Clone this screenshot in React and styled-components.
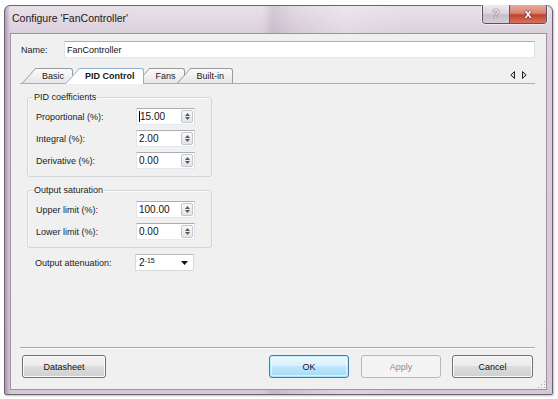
import React from 'react';
import styled, { createGlobalStyle } from 'styled-components';

const Global = createGlobalStyle`
  html, body { margin: 0; padding: 0; background: #ffffff; }
  body {
    font-family: "Liberation Sans", Arial, sans-serif;
    font-size: 9px;
    color: #111;
  }
`;

const Page = styled.div`
  width: 558px;
  height: 399px;
  box-sizing: border-box;
  padding: 5px 5px 4px 4px;
  display: flex;
`;

const Window = styled.div`
  flex: 1;
  display: flex;
  flex-direction: column;
  border: 1px solid #6d6470;
  border-radius: 6px 6px 2px 2px;
  padding: 0 5px 4px 5px;
  box-shadow: 1px 1px 2px rgba(0, 0, 0, 0.25);
  background:
    linear-gradient(to right, rgba(140, 105, 145, 0.55) 0px, rgba(150, 120, 155, 0.15) 4px, rgba(150, 120, 155, 0) 5px),
    linear-gradient(to right, rgba(255,255,255,0) 0%, rgba(255,255,255,0) 47%, rgba(120,100,125,0.18) 49%, rgba(120,100,125,0.05) 53%, rgba(255,255,255,0.18) 62%, rgba(255,255,255,0) 75%),
    linear-gradient(to bottom, #e9e1ea 0px, #dbd0dc 26px, #d6c9d7 100%);
`;

const TitleBar = styled.div`
  height: 27px;
  display: flex;
  align-items: flex-start;
  padding-left: 2px;
`;

const TitleText = styled.div`
  font-family: "Liberation Sans", Arial, sans-serif;
  font-size: 10.5px;
  line-height: 13px;
  padding-top: 6px;
  color: #1a1a1a;
  flex: 1;
`;

const CaptionGroup = styled.div`
  display: flex;
  margin-top: -1px;
  border: 1px solid #5c5462;
  border-top: none;
  border-radius: 0 0 4px 4px;
  overflow: hidden;
  height: 18px;
  box-shadow: 0 0 0 1px rgba(255,255,255,0.5);
`;

const CaptionButton = styled.div`
  width: ${p => p.$w}px;
  display: flex;
  align-items: center;
  justify-content: center;
  font-weight: 700;
  font-size: ${p => p.$fs}px;
  line-height: 1;
  padding-bottom: 1px;
  box-sizing: border-box;
  color: ${p => (p.$close ? '#ffffff' : '#e9e6ec')};
  text-shadow: ${p =>
    p.$close
      ? '0 0 1px #4a2020, 0 0 1px #4a2020, 0 0 1px #4a2020'
      : '0 0 1px #5a5560, 0 0 1px #5a5560'};
  border-left: ${p => (p.$close ? '1px solid #5c5462' : 'none')};
  background: ${p =>
    p.$close
      ? 'linear-gradient(to bottom, #e7aa9c 0%, #d98573 45%, #c4432d 55%, #d2745f 100%)'
      : 'linear-gradient(to bottom, #eeebf0 0%, #dcd6df 45%, #c6bfca 55%, #d3cdd6 100%)'};
`;

const Client = styled.div`
  flex: 1;
  position: relative;
  display: flex;
  flex-direction: column;
  background: #f0f0f0;
  border: 1px solid #9d93a0;
  padding: 7px 11px 11px 10px;
`;

const NameRow = styled.div`
  display: flex;
  align-items: center;
  height: 17px;
`;

const Label = styled.div`
  width: ${p => p.$w || 0}px;
  flex: none;
  color: #1a1a1a;
  white-space: nowrap;
`;

const TextInput = styled.div`
  flex: 1;
  height: 17px;
  box-sizing: border-box;
  background: #fff;
  border: 1px solid;
  border-color: #abadb3 #dbdfe6 #e3e9ef #e2e3ea;
  padding-left: 2px;
  display: flex;
  align-items: center;
`;

const TabStrip = styled.div`
  margin-top: 10px;
  margin-left: -1px;
  height: 15px;
  display: flex;
  align-items: flex-end;
  border-bottom: 1px solid #8db2e3;
  padding-left: 2px;
`;

const Tab = styled.div`
  position: relative;
  z-index: ${p => (p.$active ? 10 : p.$z)};
  box-sizing: border-box;
  height: ${p => (p.$active ? 16 : 15)}px;
  margin-bottom: ${p => (p.$active ? -1 : 0)}px;
  margin-left: ${p => (p.$first ? 0 : -8)}px;
  padding: ${p => (p.$active ? '0 9px 1px 20px' : '0 9px 0 20px')};
  display: flex;
  align-items: center;
  font-weight: ${p => (p.$active ? 700 : 400)};
  color: #1a1a1a;
  white-space: nowrap;

  &::before {
    content: '';
    position: absolute;
    z-index: -1;
    left: 14px;
    right: 0;
    top: 0;
    bottom: 0;
    background: ${p => (p.$active ? '#ffffff' : 'linear-gradient(to bottom, #fbfbfb, #e6e6e6)')};
    border: 1px solid ${p => (p.$active ? '#8fb0d4' : '#9a9a9a')};
    border-left: none;
    border-bottom: none;
    border-radius: 0 3px 0 0;
  }

  &::after {
    content: '';
    position: absolute;
    z-index: -1;
    left: 0;
    top: 0;
    bottom: 0;
    width: 16px;
    background: ${p => (p.$active ? '#ffffff' : 'linear-gradient(to bottom, #fbfbfb, #e6e6e6)')};
    border-left: 1px solid ${p => (p.$active ? '#8fb0d4' : '#9a9a9a')};
    border-top: 1px solid ${p => (p.$active ? '#8fb0d4' : '#9a9a9a')};
    transform-origin: bottom left;
    transform: skewX(-42deg);
  }
`;

const ScrollArrows = styled.div`
  margin-left: auto;
  align-self: center;
  display: flex;
  gap: 7px;
  padding-right: 8px;
  margin-bottom: 1px;
`;

const TabBody = styled.div`
  flex: 1;
  padding: 8px 0 0 6px;
  display: flex;
  flex-direction: column;
  align-items: flex-start;
`;

const GroupBox = styled.fieldset`
  margin: ${p => p.$mt || 0}px 0 0 0;
  width: 185px;
  box-sizing: border-box;
  border: 1px solid #d2d6db;
  border-radius: 3px;
  padding: 5px 8px 7px 8px;
  box-shadow: inset 1px 1px 0 #fbfbfb;
`;

const Legend = styled.legend`
  padding: 0 1px;
  margin-left: -3px;
  line-height: 11px;
  color: #1a1a1a;
`;

const FormGrid = styled.div`
  display: grid;
  grid-template-columns: 100px 59px;
  row-gap: 5px;
  align-items: center;
  padding-left: ${p => p.$pl || 0}px;
  margin-top: ${p => p.$mt || 0}px;
`;

const SpinBox = styled.div`
  height: 17px;
  box-sizing: border-box;
  background: #fff;
  border: 1px solid;
  border-color: #abadb3 #dbdfe6 #e3e9ef #e2e3ea;
  display: flex;
  align-items: stretch;
`;

const SpinValue = styled.div`
  flex: 1;
  display: flex;
  align-items: center;
  padding-left: 2px;
  color: #111;
  font-size: 10px;
`;

const Caret = styled.span`
  display: inline-block;
  width: 1px;
  height: 11px;
  background: #000;
`;

const Spinner = styled.div`
  width: 12px;
  margin: 1px 1px 1px 0;
  box-sizing: border-box;
  border: 1px solid #c3c7cc;
  border-radius: 2px;
  background: linear-gradient(to bottom, #f8f8f8, #e4e4e4);
  display: flex;
  flex-direction: column;
  align-items: center;
  justify-content: center;
  gap: 1px;
`;

const Combo = styled(SpinBox)`
  border-color: #b7bcc3 #d5d9de #d5d9de #d5d9de;
  align-items: center;
  padding-right: 5px;
  justify-content: space-between;
`;

const ComboValue = styled.div`
  padding-left: 3px;
  font-size: 10px;
  color: #111;
  sup {
    font-size: 7px;
    vertical-align: 3px;
    line-height: 0;
  }
`;

const Separator = styled.div`
  margin: 0 0 0 -1px;
  border-top: 1px solid #a9a9a9;
  border-bottom: 1px solid #fcfcfc;
`;

const ButtonRow = styled.div`
  margin-top: 6px;
  display: flex;
  padding: 0 2px 0 1px;
`;

const Button = styled.div`
  width: ${p => p.$w}px;
  height: 23px;
  box-sizing: border-box;
  margin-left: ${p => p.$ml || 0};
  border: 1px solid ${p => (p.$default ? '#3c7fb1' : p.$disabled ? '#b5b9bd' : '#707070')};
  border-radius: 3px;
  display: flex;
  align-items: center;
  justify-content: center;
  color: ${p => (p.$disabled ? '#8d8d8d' : '#111')};
  font-size: 9px;
  background: ${p =>
    p.$default
      ? 'linear-gradient(to bottom, #eaf6fd 0%, #d9f0fc 49%, #bee6fd 50%, #a7d9f5 100%)'
      : p.$disabled
      ? '#f4f4f4'
      : 'linear-gradient(to bottom, #f2f2f2 0%, #ebebeb 49%, #dddddd 50%, #cfcfcf 100%)'};
  box-shadow: ${p =>
    p.$default ? 'inset 0 0 0 1px #48d8fb55, inset 0 0 0 2px #ffffff88' : p.$disabled ? 'none' : 'inset 0 0 0 1px #fcfcfc'};
`;

const Grip = styled.div`
  position: absolute;
  right: 1px;
  bottom: 1px;
  width: 8px;
  height: 8px;
  background-image: radial-gradient(circle, #a9a9a9 0.7px, transparent 1px);
  background-size: 3px 3px;
  clip-path: polygon(100% 0, 100% 100%, 0 100%);
`;

const UpArrow = () => (
  <svg width="5" height="3" viewBox="0 0 5 3">
    <path d="M0 3 L2.5 0 L5 3 Z" fill="#4d5a6c" />
  </svg>
);
const DownArrow = () => (
  <svg width="5" height="3" viewBox="0 0 5 3">
    <path d="M0 0 L2.5 3 L5 0 Z" fill="#4d5a6c" />
  </svg>
);

const Spin = ({ value, caret }) => (
  <SpinBox>
    <SpinValue>
      {caret && <Caret />}
      {value}
    </SpinValue>
    <Spinner>
      <UpArrow />
      <DownArrow />
    </Spinner>
  </SpinBox>
);

export default function App() {
  return (
    <>
      <Global />
      <Page>
        <Window>
          <TitleBar>
            <TitleText>Configure 'FanController'</TitleText>
            <CaptionGroup>
              <CaptionButton $w={26} $fs={12}>?</CaptionButton>
              <CaptionButton $w={37} $fs={13} $close>x</CaptionButton>
            </CaptionGroup>
          </TitleBar>
          <Client>
            <NameRow>
              <Label $w={43}>Name:</Label>
              <TextInput>FanController</TextInput>
            </NameRow>
            <TabStrip>
              <Tab $first $z={4}>Basic</Tab>
              <Tab $active>PID Control</Tab>
              <Tab $z={2}>Fans</Tab>
              <Tab $z={3}>Built-in</Tab>
              <ScrollArrows>
                <svg width="5" height="8" viewBox="0 0 5 8">
                  <path d="M4.5 0.5 L0.8 4 L4.5 7.5 Z" fill="#d8d8d8" stroke="#222" strokeWidth="1" />
                </svg>
                <svg width="5" height="8" viewBox="0 0 5 8">
                  <path d="M0.5 0.5 L4.2 4 L0.5 7.5 Z" fill="#d8d8d8" stroke="#222" strokeWidth="1" />
                </svg>
              </ScrollArrows>
            </TabStrip>
            <TabBody>
              <GroupBox>
                <Legend>PID coefficients</Legend>
                <FormGrid>
                  <Label>Proportional (%):</Label>
                  <Spin value="15.00" caret />
                  <Label>Integral (%):</Label>
                  <Spin value="2.00" />
                  <Label>Derivative (%):</Label>
                  <Spin value="0.00" />
                </FormGrid>
              </GroupBox>
              <GroupBox $mt={8}>
                <Legend>Output saturation</Legend>
                <FormGrid>
                  <Label>Upper limit (%):</Label>
                  <Spin value="100.00" />
                  <Label>Lower limit (%):</Label>
                  <Spin value="0.00" />
                </FormGrid>
              </GroupBox>
              <FormGrid $pl={8} $mt={6}>
                <Label>Output attenuation:</Label>
                <Combo>
                  <ComboValue>
                    2<sup>-15</sup>
                  </ComboValue>
                  <svg width="7" height="4" viewBox="0 0 7 4">
                    <path d="M0 0 L7 0 L3.5 4 Z" fill="#111" />
                  </svg>
                </Combo>
              </FormGrid>
            </TabBody>
            <Separator />
            <ButtonRow>
              <Button $w={84}>Datasheet</Button>
              <Button $w={80} $ml="auto" $default>OK</Button>
              <Button $w={80} $ml="12px" $disabled>Apply</Button>
              <Button $w={81} $ml="11px">Cancel</Button>
            </ButtonRow>
            <Grip />
          </Client>
        </Window>
      </Page>
    </>
  );
}
